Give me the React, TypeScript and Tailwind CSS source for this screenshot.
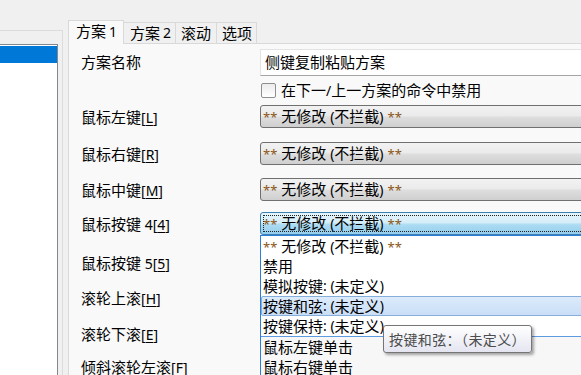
import React from "react";

const Lbl = ({ cn, k, sp }: { cn: string; k: string; sp?: string }) => (
  <span className="whitespace-nowrap">
    {cn}
    {sp ? <span className="text-[14px]">{" " + sp}</span> : null}
    <span className="text-[14px]">
      [<span className="underline underline-offset-2">{k}</span>]
    </span>
  </span>
);

const ComboText = () => (
  <span className="whitespace-nowrap">
    <span className="text-[#8a5516] text-[13px]">**</span> 无修改 <span className="text-[14px]">(</span>不拦截<span className="text-[14px]">)</span>{" "}
    <span className="text-[#8a5516] text-[13px]">**</span>
  </span>
);

const Combo = ({ focused }: { focused?: boolean }) =>
  focused ? (
    <div className="relative h-[23px] w-[400px] shrink-0 rounded-[3px] border border-[#3c7fb1] bg-[linear-gradient(to_bottom,#e3f4fc_0%,#d6eef9_45%,#aedcf3_55%,#93cdec_100%)] flex items-center pl-[2px]">
      <div className="absolute left-[2px] right-[2px] top-[2px] bottom-[2px] border border-dotted border-[#222]" />
      <ComboText />
    </div>
  ) : (
    <div className="h-[23px] w-[400px] shrink-0 rounded-[3px] border border-[#707070] bg-[linear-gradient(to_bottom,#f2f2f2_0%,#ebebeb_45%,#dddddd_55%,#cfcfcf_100%)] flex items-center pl-[2px]">
      <ComboText />
    </div>
  );

export default function App() {
  return (
    <div className="relative w-[581px] h-[375px] overflow-hidden bg-[#f0f0f0] text-black text-[15px] leading-none font-['Noto_Sans','Noto_Sans_CJK_SC',sans-serif] flex">
      {/* left panel */}
      <div className="w-[68px] shrink-0 pt-[30px] flex flex-col">
        <div className="flex-1 w-[63px] border-t border-r border-[#dcdcdc] pt-[13px] flex flex-col">
          <div className="flex-1 w-[58px] bg-white border-t border-r border-[#828790] pt-[1px]">
            <div className="h-[17px] bg-[#0078d7]" />
          </div>
        </div>
      </div>

      {/* tab control */}
      <div className="flex-1 min-w-0 pt-[20px] flex flex-col">
        <div className="relative z-10 flex h-[24px] items-end">
          <div className="h-[24px] w-[56px] shrink-0 border border-b-0 border-[#d9d9d9] bg-[#f9f9f9] pl-[7px] pb-[2px] flex items-center whitespace-nowrap">
            方案 <span className="ml-[3px] text-[14px]">1</span>
          </div>
          <div className="mb-[1px] h-[21px] w-[52px] shrink-0 border-t border-r border-[#d9d9d9] bg-[#f0f0f0] pl-[6px] flex items-center whitespace-nowrap">
            方案 <span className="ml-[3px] text-[14px]">2</span>
          </div>
          <div className="mb-[1px] h-[21px] w-[41px] shrink-0 border-t border-r border-[#d9d9d9] bg-[#f0f0f0] pl-[5px] flex items-center">
            滚动
          </div>
          <div className="mb-[1px] h-[21px] w-[40px] shrink-0 border-t border-r border-[#d9d9d9] bg-[#f0f0f0] pl-[5px] flex items-center">
            选项
          </div>
        </div>
        <div className="-mt-[1px] flex-1 border-l border-t border-[#d9d9d9] bg-[#f9f9f9] pl-[12px] pt-[5px] flex flex-col">
          {/* row 1 */}
          <div className="flex h-[27px] items-center">
            <div className="w-[179px] shrink-0">方案名称</div>
            <div className="h-[27px] w-[400px] shrink-0 bg-white border border-[#e3e3e3] border-b-[#a5a5a5] pl-[4px] flex items-center">
              侧键复制粘贴方案
            </div>
          </div>
          {/* row 2 */}
          <div className="flex h-[28px] items-center">
            <div className="w-[179px] shrink-0" />
            <div className="ml-[1px] h-[15px] w-[15px] shrink-0 rounded-[2px] border border-[#8f8f8f] bg-[linear-gradient(to_bottom,#ececec,#ffffff)]" />
            <div className="ml-[5px] whitespace-nowrap">
              在下一<span className="text-[14px]">/</span>上一方案的命令中禁用
            </div>
          </div>
          {/* combos */}
          <div className="mt-[1px] flex h-[24px] items-start">
            <div className="w-[179px] shrink-0 h-[24px] flex items-center"><Lbl cn="鼠标左键" k="L" /></div>
            <Combo />
          </div>
          <div className="mt-[13px] flex h-[24px] items-start">
            <div className="w-[179px] shrink-0 h-[24px] flex items-center"><Lbl cn="鼠标右键" k="R" /></div>
            <Combo />
          </div>
          <div className="mt-[12px] flex h-[24px] items-start">
            <div className="w-[179px] shrink-0 h-[24px] flex items-center"><Lbl cn="鼠标中键" k="M" /></div>
            <Combo />
          </div>
          <div className="mt-[10px] flex h-[24px] items-start">
            <div className="w-[179px] shrink-0 h-[24px] flex items-center"><Lbl cn="鼠标按键" sp="4" k="4" /></div>
            <Combo focused />
          </div>
          <div className="mt-[15px] flex h-[24px] items-center">
            <Lbl cn="鼠标按键" sp="5" k="5" />
          </div>
          <div className="mt-[11px] flex h-[24px] items-center">
            <Lbl cn="滚轮上滚" k="H" />
          </div>
          <div className="mt-[12px] flex h-[24px] items-center">
            <Lbl cn="滚轮下滚" k="E" />
          </div>
          <div className="mt-[9px] flex h-[24px] items-center">
            <Lbl cn="倾斜滚轮左滚" k="F" />
          </div>
        </div>
      </div>

      {/* dropdown list */}
      <div className="absolute left-[260px] top-[235px] w-[400px] h-[160px] border border-[#2b7fd9] bg-white flex flex-col">
        <div className="h-[20px] pl-[2px] flex items-center"><ComboText /></div>
        <div className="h-[20px] pl-[2px] flex items-center">禁用</div>
        <div className="h-[20px] pl-[2px] flex items-center whitespace-nowrap">
          模拟按键<span className="text-[14px]">: (</span>未定义<span className="text-[14px]">)</span>
        </div>
        <div className="h-[20px] pl-[1px] flex items-center whitespace-nowrap rounded-[2px] border border-[#86aedb] bg-[linear-gradient(to_bottom,#dcebfb,#c9def7)]">
          按键和弦<span className="text-[14px]">: (</span>未定义<span className="text-[14px]">)</span>
        </div>
        <div className="h-[20px] pl-[2px] flex items-center whitespace-nowrap">
          按键保持<span className="text-[14px]">: (</span>未定义<span className="text-[14px]">)</span>
        </div>
        <div className="flex-1 border-t border-[#5d9be0] bg-[#f7f7f7] flex flex-col">
          <div className="h-[20px] pl-[2px] flex items-center">鼠标左键单击</div>
          <div className="h-[20px] pl-[2px] flex items-center">鼠标右键单击</div>
        </div>
      </div>

      {/* tooltip */}
      <div className="absolute left-[383px] top-[325px] w-[149px] h-[28px] rounded-[3px] border border-[#767676] bg-[linear-gradient(to_bottom,#ffffff,#e4e5f0)] shadow-[2px_2px_3px_rgba(0,0,0,0.35)] pl-[5px] flex items-center text-[14px] tracking-[0.4px] text-[#4c4c4c] whitespace-nowrap font-['Noto_Sans_CJK_SC',sans-serif]">
        按键和弦：（未定义）
      </div>
    </div>
  );
}
